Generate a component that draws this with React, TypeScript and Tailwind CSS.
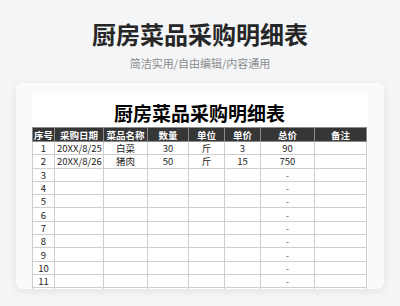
const cols = [
  { label: '序号', w: 22 },
  { label: '采购日期', w: 49 },
  { label: '菜品名称', w: 44 },
  { label: '数量', w: 41 },
  { label: '单位', w: 36 },
  { label: '单价', w: 36 },
  { label: '总价', w: 54 },
  { label: '备注', w: 52 },
]

const data = [
  ['1', '20XX/8/25', '白菜', '30', '斤', '3', '90', ''],
  ['2', '20XX/8/26', '猪肉', '50', '斤', '15', '750', ''],
]

const rows = [
  ...data,
  ...Array.from({ length: 10 }, (_, i) => [String(i + 3), '', '', '', '', '', '-', '']),
]

export default function App() {
  return (
    <div
      className="h-[306px] w-[400px] overflow-hidden bg-[#f4f5f7]"
      style={{ fontFamily: '"Noto Sans CJK SC", "Noto Sans", sans-serif' }}
    >
      <div className="pt-[17px] text-center">
        <h1 className="text-[24px] font-bold leading-[34px] text-[#262626]">厨房菜品采购明细表</h1>
        <p className="mt-[5px] text-[11px] leading-[14px] text-[#8c8c8c]">简洁实用/自由编辑/内容通用</p>
      </div>

      <div className="mx-[16px] mt-[13px] h-[206px] overflow-hidden rounded-[6px] bg-[#fafafa] px-[16px] pt-[12px] shadow-[0_2px_8px_rgba(0,0,0,0.08)]">
        <div className="h-full bg-white pr-[1px]">
          <div className="pt-[4px] text-center text-[19px] font-bold leading-[28px] text-black">
            厨房菜品采购明细表
          </div>
          <table className="w-[334px] table-fixed border-collapse text-[9.5px] text-[#222]">
            <colgroup>
              {cols.map(c => (
                <col key={c.label} style={{ width: c.w }} />
              ))}
            </colgroup>
            <thead>
              <tr className="h-[14px] bg-[#363636] text-white">
                {cols.map(c => (
                  <th key={c.label} className="border border-[#8a8a8a] p-0 text-center font-bold leading-[12px]">
                    {c.label}
                  </th>
                ))}
              </tr>
            </thead>
            <tbody>
              {rows.map((r, ri) => (
                <tr key={ri} className="h-[13.3px]">
                  {r.map((cell, ci) => (
                    <td
                      key={ci}
                      className={`border border-[#cfcfcf] p-0 text-center leading-[12px] ${
                        cell === '-' ? 'text-[#666]' : ''
                      } ${ci === 1 ? 'text-left pl-[2px]' : ''}`}
                    >
                      {cell}
                    </td>
                  ))}
                </tr>
              ))}
            </tbody>
          </table>
        </div>
      </div>
    </div>
  )
}
